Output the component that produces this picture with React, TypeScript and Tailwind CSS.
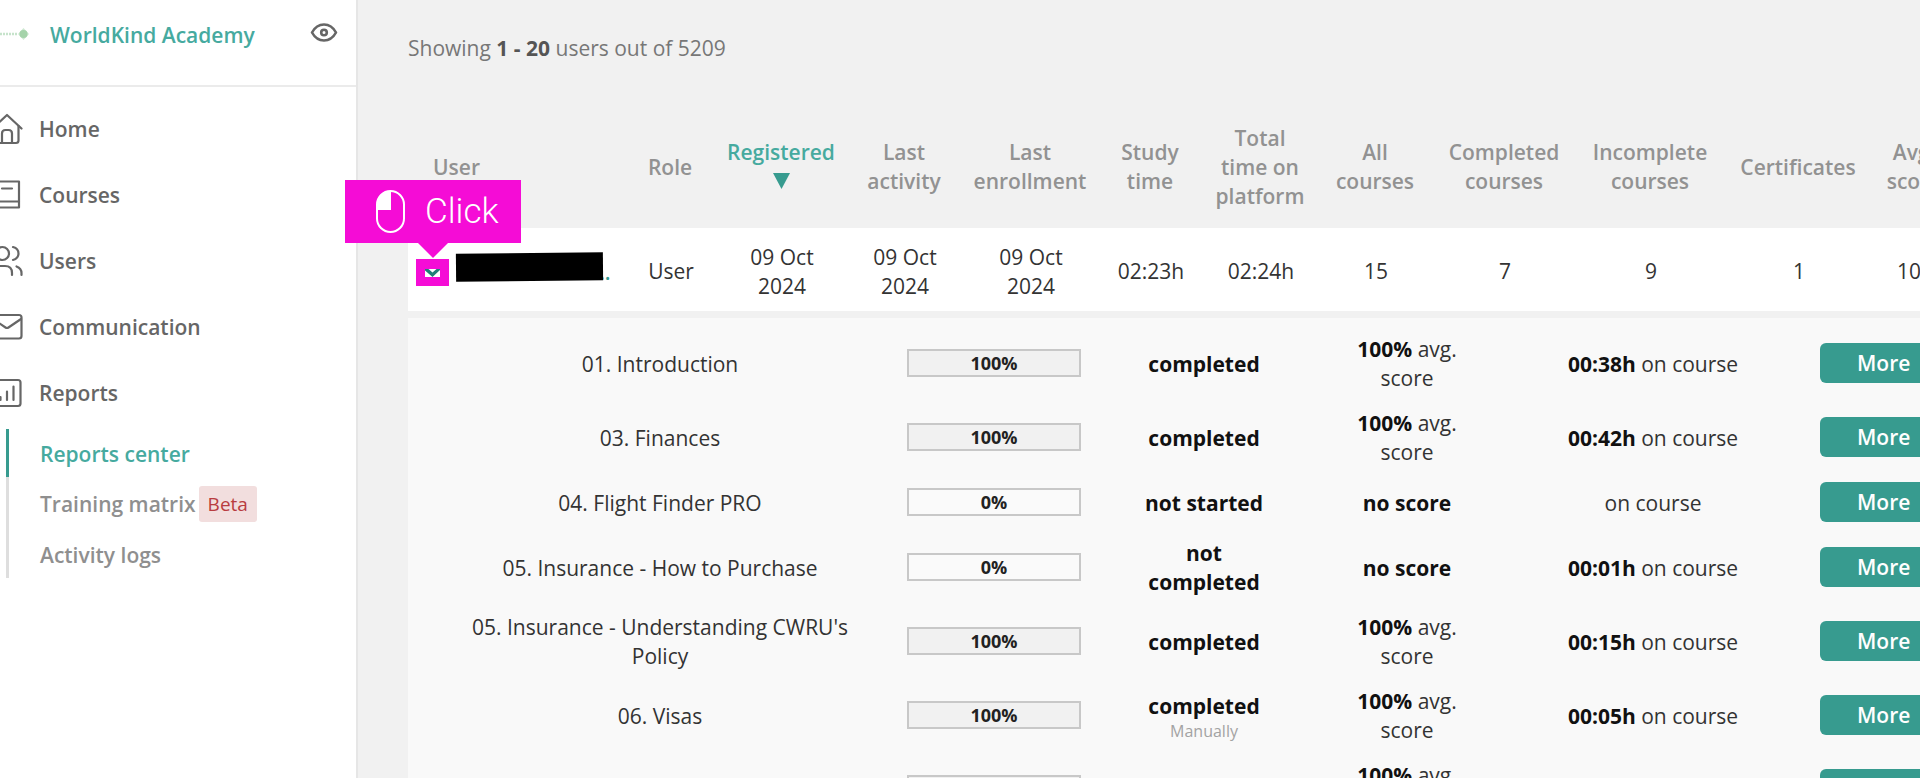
import type { ReactNode } from "react";

const teal = "#379b8f";

function NavIcon({ children }: { children: ReactNode }) {
  return (
    <svg className="size-8 shrink-0" viewBox="0 0 32 32" fill="none" stroke="currentColor" strokeWidth="2.200" strokeLinecap="round" strokeLinejoin="round" aria-hidden="true">
      {children}
    </svg>
  );
}

const nav: { label: string; icon: ReactNode }[] = [
  {
    label: "Home",
    icon: (
      <>
        <path d="M1.5 15.5 16 2l14.500 13.500" />
        <path d="M4.500 13v14.500q0 2.500 2.500 2.500h18q2.500 0 2.500-2.500V13" />
        <path d="M11 30v-9.500q0-3.500 3.500-3.500h3q3.500 0 3.500 3.500V30" />
      </>
    ),
  },
  {
    label: "Courses",
    icon: (
      <>
        <path d="M28 2.500H7A3 3 0 0 0 4 5.500v20a3 3 0 0 0 3 3h21z" />
        <path d="M4.500 22.500H28M11 9.500h10" />
      </>
    ),
  },
  {
    label: "Users",
    icon: (
      <>
        <circle cx="11.500" cy="8.500" r="6.500" />
        <path d="M22 2q5.500 1.500 5.500 6.500T22 15" />
        <path d="M1 30v-2q0-7 7-7h6q7 0 7 7v2" />
        <path d="M25.500 21.500q5 2 5 6.500v2" />
      </>
    ),
  },
  {
    label: "Communication",
    icon: (
      <>
        <rect x="1.500" y="4" width="29" height="23.500" rx="2.500" />
        <path d="m2 8 12.500 8.500q1.500 1 3 0L30 8" />
      </>
    ),
  },
  {
    label: "Reports",
    icon: (
      <>
        <rect x="2.500" y="3" width="27" height="26" rx="2.500" />
        <path d="M9.500 20v3M16 14.500V23M22.500 9.500V23" />
      </>
    ),
  },
];

const headers = [
  ["Role"],
  ["Registered"],
  ["Last", "activity"],
  ["Last", "enrollment"],
  ["Study", "time"],
  ["Total", "time on", "platform"],
  ["All", "courses"],
  ["Completed", "courses"],
  ["Incomplete", "courses"],
  ["Certificates"],
  ["Avg.", "score"],
];

const values = [
  ["User"],
  ["09 Oct", "2024"],
  ["09 Oct", "2024"],
  ["09 Oct", "2024"],
  ["02:23h"],
  ["02:24h"],
  ["15"],
  ["7"],
  ["9"],
  ["1"],
  ["100"],
];

type Course = { name: string[]; progress: number; status: string[]; manual?: boolean; score?: string; time?: string };

const courses: Course[] = [
  { name: ["01. Introduction"], progress: 100, status: ["completed"], score: "100%", time: "00:38h" },
  { name: ["03. Finances"], progress: 100, status: ["completed"], score: "100%", time: "00:42h" },
  { name: ["04. Flight Finder PRO"], progress: 0, status: ["not started"] },
  { name: ["05. Insurance - How to Purchase"], progress: 0, status: ["not", "completed"], time: "00:01h" },
  { name: ["05. Insurance - Understanding CWRU's", "Policy"], progress: 100, status: ["completed"], score: "100%", time: "00:15h" },
  { name: ["06. Visas"], progress: 100, status: ["completed"], manual: true, score: "100%", time: "00:05h" },
  { name: ["07."], progress: 100, status: ["completed"], score: "100%", time: "00:10h" },
];

function Lines({ lines }: { lines: string[] }) {
  return (
    <>
      {lines.map((line) => (
        <span key={line} className="block whitespace-nowrap">
          {line}
        </span>
      ))}
    </>
  );
}

function Sidebar() {
  return (
    <aside className="w-[358px] shrink-0 border-r-2 border-[#e6e6e6] bg-white font-semibold text-[#666]">
      <div className="flex h-[87px] items-start border-b-2 border-[#ebebeb] pt-5 pr-[18px]">
        <svg className="mt-1 h-5 w-[30px] shrink-0" viewBox="0 0 30 20" aria-hidden="true">
          <path d="M0 10h17" stroke="#c6e3cb" strokeWidth="2.500" strokeDasharray="2 1" />
          <path d="m23.500 4 5.500 6-5.500 6-5.500-6z" fill="#cfe8d2" />
          <circle cx="23.500" cy="10" r="4" fill="#a5d3aa" />
        </svg>
        <a href="#home" className="ml-5 leading-[31px] whitespace-nowrap text-[#46aa9f]">
          WorldKind Academy
        </a>
        <button type="button" aria-label="Preview" className="ml-auto text-[#666]">
          <svg className="h-6 w-7" viewBox="0 0 28 24" fill="none" stroke="currentColor" strokeWidth="2.600" aria-hidden="true">
            <path d="M2 12.500C5 7 9 4.500 14 4.500s9 2.500 12 8c-3 5.500-7 8-12 8s-9-2.500-12-8z" strokeLinejoin="round" />
            <circle cx="14" cy="12.500" r="2.800" />
          </svg>
        </button>
      </div>
      <nav className="pt-[9px]">
        {nav.map((item) => (
          <a key={item.label} href={`#${item.label}`} className="-ml-[9px] flex h-[66px] items-center gap-4">
            <NavIcon>{item.icon}</NavIcon>
            {item.label}
          </a>
        ))}
        <div className="mt-[3px] ml-[6px] text-[#8f8f8f]">
          <a href="#center" className="flex h-12 items-center border-l-[3px] border-[#379b8f] pt-[2px] pl-[31px] text-[#46aa9f]">
            Reports center
          </a>
          <a href="#matrix" className="flex h-[54px] items-center gap-[3px] border-l-[3px] border-[#dedede] pl-[31px]">
            Training matrix
            <span className="rounded-[3px] bg-[#f2dede] px-[9px] py-[3px] text-[19px] leading-[30px] font-normal text-[#b93c40]">Beta</span>
          </a>
          <a href="#logs" className="flex h-[47px] items-center border-l-[3px] border-[#dedede] pt-[2px] pl-[31px]">
            Activity logs
          </a>
        </div>
      </nav>
    </aside>
  );
}

function ClickCallout() {
  return (
    <div className="absolute -top-[79px] -left-[71px] z-10 flex h-[63px] w-44 items-center bg-[#f50cd6] pl-[31px] text-white">
      <svg className="h-[43px] w-[29px]" viewBox="0 0 29 43" fill="none" aria-hidden="true">
        <rect x="1" y="1" width="27" height="41" rx="13.500" stroke="white" strokeWidth="2" />
        <path d="M15 1v19H1v-5.500A13.500 13.500 0 0 1 15 1z" fill="white" />
      </svg>
      <span className="ml-5 font-['Roboto'] text-[35px] font-light">Click</span>
      <svg className="absolute top-[62px] left-[72px] h-4 w-8" viewBox="0 0 32 16" aria-hidden="true">
        <path d="M0 0h32L16 16z" fill="#f50cd6" />
      </svg>
    </div>
  );
}

export default function App() {
  return (
    <div className="flex h-screen overflow-hidden bg-[#f1f1f1] font-['Open_Sans','Noto_Sans',sans-serif] text-[21px] leading-[29px] text-[#333]">
      <Sidebar />
      <main className="min-w-0 flex-1 pl-[50px]">
        <p className="pt-[34px] pb-[43px] text-[#777]">
          Showing <b className="text-[#555]">1 - 20</b> users out of 5209
        </p>
        <table className="w-[1668px] table-fixed border-separate border-spacing-0 text-center">
          <colgroup>
            <col className="w-[212px]" />
            <col className="w-[100px]" />
            <col className="w-[122px]" />
            <col className="w-[124px]" />
            <col className="w-[128px]" />
            <col className="w-[112px]" />
            <col className="w-[108px]" />
            <col className="w-[122px]" />
            <col className="w-[136px]" />
            <col className="w-[156px]" />
            <col className="w-[140px]" />
            <col className="w-[92px]" />
            <col />
          </colgroup>
          <thead>
            <tr className="h-[122px] text-[#929292]">
              <th className="pl-[25px] text-left font-semibold">User</th>
              {headers.map((lines) =>
                lines[0] === "Registered" ? (
                  <th key="Registered" className="font-semibold text-[#46aa9f]" aria-sort="descending">
                    <button type="button" className="block w-full">
                      Registered
                      <svg className="mx-auto my-[6px] h-[17px] w-[17px]" viewBox="0 0 17 17" aria-hidden="true">
                        <path d="M0 0h17L8.500 16z" fill={teal} />
                      </svg>
                    </button>
                  </th>
                ) : (
                  <th key={lines.join()} className="font-semibold">
                    <Lines lines={lines} />
                  </th>
                ),
              )}
              <th />
            </tr>
          </thead>
          <tbody>
            <tr className="h-[83px] bg-white">
              <td className="pt-[6px] pl-2">
                <div className="flex items-center">
                  <div className="relative shrink-0">
                    <button type="button" aria-label="Collapse courses" className="flex h-[27px] w-[33px] items-center justify-center bg-[#f50cd6]">
                      <svg className="h-2 w-[15px]" viewBox="0 0 15 8" aria-hidden="true">
                        <path d="M0 0h15v8H0z" fill="white" />
                        <path d="M0 0h3.500l4 3.500 4-3.500H15v1L7.500 8 0 1.500z" fill="#217f78" />
                      </svg>
                    </button>
                    <ClickCallout />
                  </div>
                  <a href="#user" className="ml-[7px] flex items-center font-semibold text-[#379b8f]">
                    <span className="relative z-[1] -mr-1 mb-3 block h-7 w-[147px] -rotate-[0.600deg] bg-black" />
                    <span>..</span>
                  </a>
                </div>
              </td>
              {values.map((lines, i) => (
                <td key={i} className="pt-1 pl-[2px]">
                  <Lines lines={lines} />
                </td>
              ))}
              <td />
            </tr>
            <tr>
              <td colSpan={13} className="border-t-[7px] border-[#f1f1f1] bg-[#f9f9f9] p-0 pt-2">
                <table className="w-full table-fixed border-separate border-spacing-0 text-center">
                  <colgroup>
                    <col className="w-[484px]" />
                    <col className="w-[204px]" />
                    <col className="w-[216px]" />
                    <col className="w-[190px]" />
                    <col className="w-[302px]" />
                    <col />
                  </colgroup>
                  <tbody>
                    {courses.map((course) => (
                      <tr key={course.name[0]}>
                        <td className="pt-[9px] pb-[7px] pl-5">
                          <Lines lines={course.name} />
                        </td>
                        <td className="px-[15px]">
                          <div className={`border-2 border-[#c8c8c8] text-[18px] leading-6 font-bold text-[#222] ${course.progress ? "bg-[#f1f1f1]" : "bg-[#fafafa]"}`}>{course.progress}%</div>
                        </td>
                        <td className="pt-[9px] pb-[7px] font-bold text-[#111]">
                          <Lines lines={course.status} />
                          {course.manual && <span className="block text-[16px] leading-5 font-normal text-[#a3a3a3]">Manually</span>}
                        </td>
                        <td className="pt-[9px] pb-[7px]">
                          {course.score ? (
                            <>
                              <b className="text-[#111]">{course.score}</b> avg.
                              <br />
                              score
                            </>
                          ) : (
                            <b className="text-[#111]">no score</b>
                          )}
                        </td>
                        <td className="pt-[9px] pb-[7px]">
                          {course.time && <b className="text-[#111]">{course.time} </b>}
                          on course
                        </td>
                        <td className="py-2 pl-4 text-left">
                          <button type="button" className="block h-10 rounded-[6px] bg-[#379b8f] px-[37px] font-semibold text-white">
                            More
                          </button>
                        </td>
                      </tr>
                    ))}
                  </tbody>
                </table>
              </td>
            </tr>
          </tbody>
        </table>
      </main>
    </div>
  );
}
